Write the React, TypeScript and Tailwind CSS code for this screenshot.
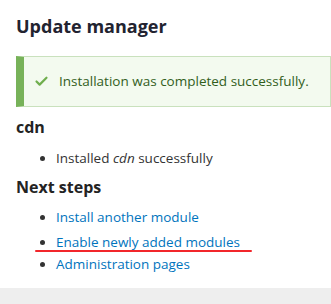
import { Check } from "lucide-react";

const links = [
  { label: "Install another module", mark: false, h: "h-[25px]" },
  { label: "Enable newly added modules", mark: true, h: "h-[22px]" },
  { label: "Administration pages", mark: false, h: "h-[24px]" },
];

export default function App() {
  return (
    <div
      className="flex min-h-[304px] flex-col bg-white text-[#232323]"
      style={{ fontFamily: '"Open Sans", "DejaVu Sans", sans-serif' }}
    >
      <div className="flex-1 pl-4 pt-[13px]">
        <h1 className="text-[18px] font-bold leading-[26px] text-[#222330]">Update manager</h1>

        <div className="mt-[17px] flex h-[51px] items-center border border-l-8 border-[#c9e1bd] border-l-[#77b259] bg-[#f3faef] pl-[10px]">
          <Check className="h-[15px] w-[15px] text-[#6fae4d]" strokeWidth={3.5} />
          <span className="ml-[10px] text-[13.5px] text-[#325e1c]">Installation was completed successfully.</span>
        </div>

        <h2 className="mt-[9px] text-[16px] font-bold leading-[22px]">cdn</h2>
        <ul className="mt-[10px] list-disc pl-[40px] text-[13.5px] leading-[20px] text-[#333]">
          <li>
            Installed <em>cdn</em> successfully
          </li>
        </ul>

        <h2 className="mt-[8px] text-[16px] font-bold leading-[22px]">Next steps</h2>
        <ul className="mt-[7px] list-disc pl-[40px] text-[13.5px] text-[#0074bd]">
          {links.map((l) => (
            <li key={l.label} className={`relative leading-[24px] marker:text-[#333] ${l.h}`}>
              <a href="#">{l.label}</a>
              {l.mark && <span className="absolute left-[-21px] top-[20px] h-[2px] w-[217px] rounded-full bg-[#f2262b]" />}
            </li>
          ))}
        </ul>
      </div>
      <div className="h-4 bg-[#eeeeee]" />
    </div>
  );
}
